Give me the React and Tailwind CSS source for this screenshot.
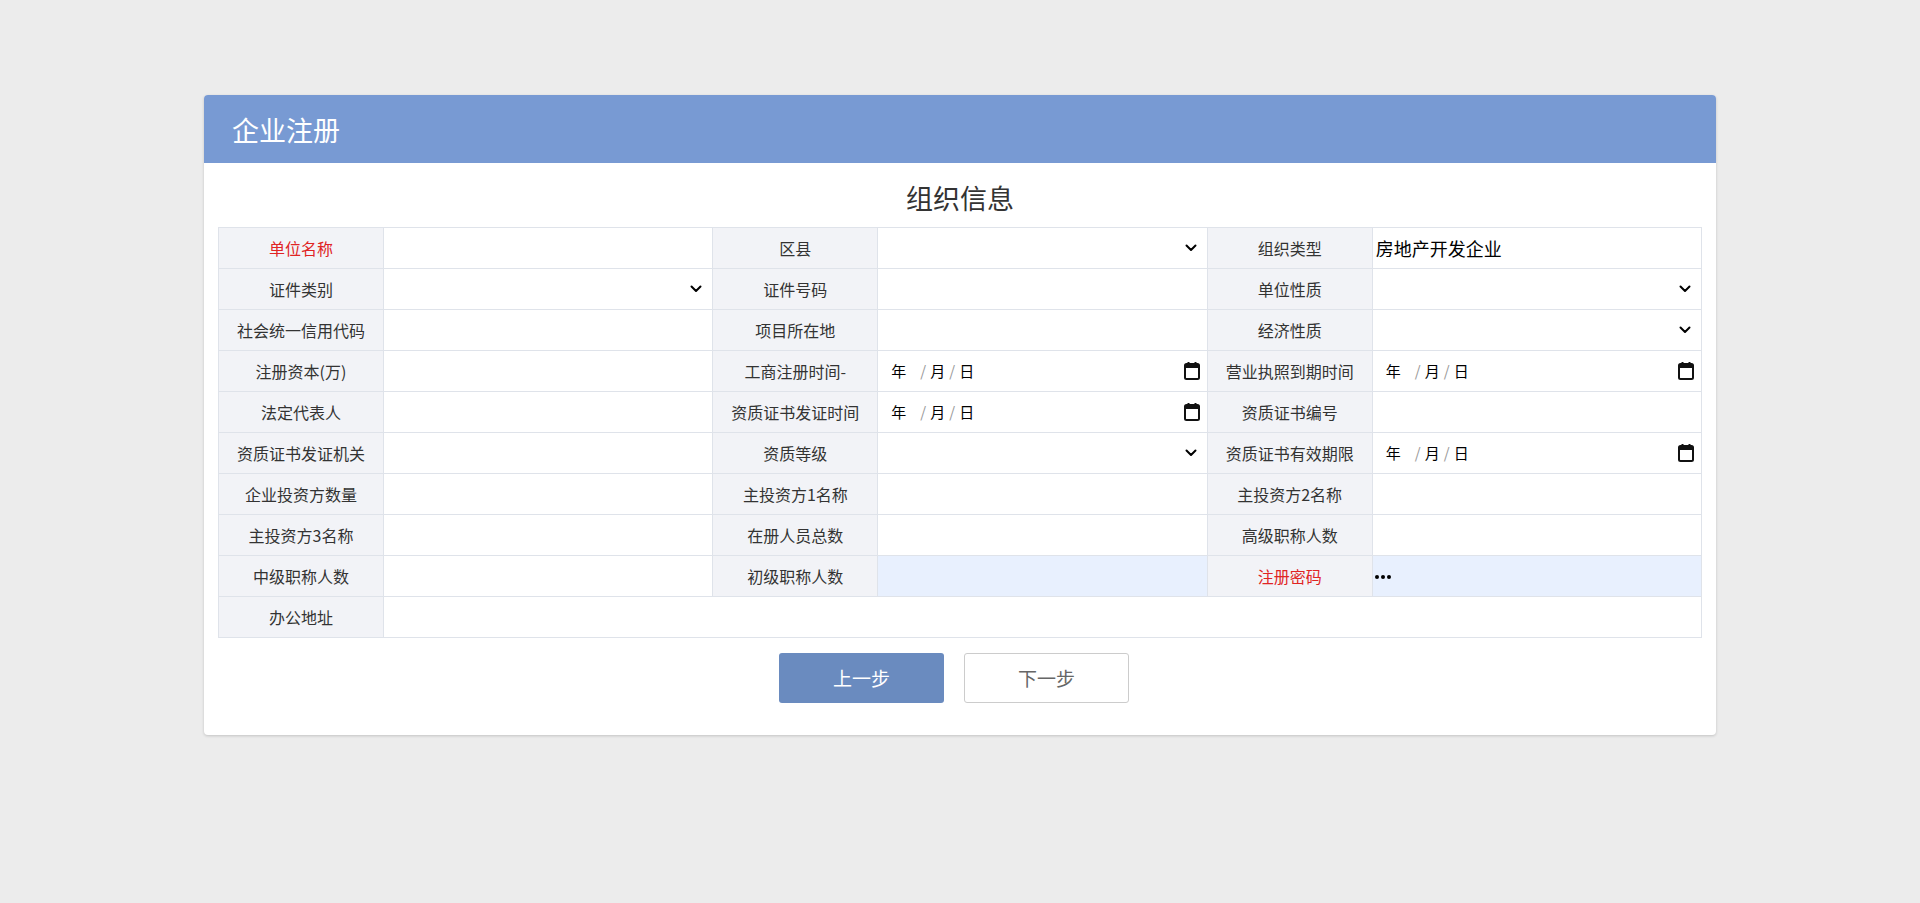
import React from "react";

const Chevron = () => (
  <svg width="12" height="8" viewBox="0 0 12 8" className="shrink-0">
    <path d="M1.5 1.5 L6 6 L10.5 1.5" fill="none" stroke="#000" strokeWidth="2" strokeLinecap="round" strokeLinejoin="round" />
  </svg>
);

const Calendar = () => (
  <svg width="16" height="18" viewBox="0 0 16 18" className="shrink-0">
    <rect x="1" y="2" width="14" height="15" rx="1.5" fill="none" stroke="#111" strokeWidth="2" />
    <rect x="1" y="2" width="14" height="4" fill="#111" />
    <rect x="3.5" y="0" width="2" height="3" fill="#111" />
    <rect x="10.5" y="0" width="2" height="3" fill="#111" />
  </svg>
);

function Label({ text, red }) {
  return (
    <div
      className={`h-[41px] border-r border-b border-[#dfe3ea] bg-[#f2f3f7] flex items-center justify-center text-[16px] ${
        red ? "text-[#e02424]" : "text-[#333]"
      }`}
    >
      {text}
    </div>
  );
}

function Value({ type, text, blue, span }) {
  let inner = null;
  if (type === "select") {
    inner = (
      <div className="flex-1 flex items-center justify-end pr-[10px]">
        <Chevron />
      </div>
    );
  } else if (type === "date") {
    inner = (
      <div className="flex-1 flex items-center justify-between pl-[13px] pr-[7px] text-[15px] text-black">
        <div className="flex items-center">
          <span className="inline-block w-[29px]">年</span>
          <span className="inline-block w-[10px] text-[#999]">/</span>
          <span className="inline-block w-[19px]">月</span>
          <span className="inline-block w-[10px] text-[#999]">/</span>
          <span>日</span>
        </div>
        <Calendar />
      </div>
    );
  } else if (type === "text") {
    inner = <div className="pl-[3px] text-[18px] text-black">{text}</div>;
  } else if (type === "password") {
    inner = (
      <div className="pl-[2px] flex items-center gap-[2px] pt-[1px]">
        <div className="w-[4px] h-[4px] rounded-full bg-black" />
        <div className="w-[4px] h-[4px] rounded-full bg-black" />
        <div className="w-[4px] h-[4px] rounded-full bg-black" />
      </div>
    );
  }
  return (
    <div
      className={`h-[41px] border-r border-b border-[#dfe3ea] flex items-center ${blue ? "bg-[#e8f0fe]" : "bg-white"} ${
        span ? "col-span-5" : ""
      }`}
    >
      {inner}
    </div>
  );
}

const rows = [
  [
    { l: "单位名称", red: true },
    { l: "区县", t: "select" },
    { l: "组织类型", t: "text", v: "房地产开发企业" },
  ],
  [
    { l: "证件类别", t: "select" },
    { l: "证件号码" },
    { l: "单位性质", t: "select" },
  ],
  [
    { l: "社会统一信用代码" },
    { l: "项目所在地" },
    { l: "经济性质", t: "select" },
  ],
  [
    { l: "注册资本(万)" },
    { l: "工商注册时间-", t: "date" },
    { l: "营业执照到期时间", t: "date" },
  ],
  [
    { l: "法定代表人" },
    { l: "资质证书发证时间", t: "date" },
    { l: "资质证书编号" },
  ],
  [
    { l: "资质证书发证机关" },
    { l: "资质等级", t: "select" },
    { l: "资质证书有效期限", t: "date" },
  ],
  [
    { l: "企业投资方数量" },
    { l: "主投资方1名称" },
    { l: "主投资方2名称" },
  ],
  [
    { l: "主投资方3名称" },
    { l: "在册人员总数" },
    { l: "高级职称人数" },
  ],
  [
    { l: "中级职称人数" },
    { l: "初级职称人数", blue: true },
    { l: "注册密码", red: true, t: "password", blue: true },
  ],
];

export default function App() {
  return (
    <div
      className="min-h-[903px] w-full bg-[#ececec] pt-[95px]"
      style={{ fontFamily: '"Noto Sans CJK SC", "Noto Sans", sans-serif' }}
    >
      <div className="mx-auto w-[1512px] rounded-[4px] bg-white shadow-[0_1px_3px_rgba(0,0,0,0.18)] overflow-hidden">
        <div className="h-[68px] bg-[#789ad3] flex items-center pl-[28px]">
          <span className="text-white text-[27px] leading-none">企业注册</span>
        </div>
        <div className="px-[14px] pb-[32px]">
          <div className="h-[64px] flex items-center justify-center text-[27px] text-[#333] leading-none pt-[4px]">
            组织信息
          </div>
          <div className="grid grid-cols-[165px_1fr_165px_1fr_165px_1fr] border-l border-t border-[#dfe3ea]">
            {rows.map((r, i) => (
              <React.Fragment key={i}>
                {r.map((c, j) => (
                  <React.Fragment key={j}>
                    <Label text={c.l} red={c.red} />
                    <Value type={c.t} text={c.v} blue={c.blue} />
                  </React.Fragment>
                ))}
              </React.Fragment>
            ))}
            <Label text="办公地址" />
            <Value span />
          </div>
          <div className="mt-[15px] flex justify-center gap-[20px] pr-[12px]">
            <button className="w-[165px] h-[50px] rounded-[3px] bg-[#6a8bbf] text-white text-[19px]">上一步</button>
            <button className="w-[165px] h-[50px] rounded-[3px] bg-white border border-[#cccccc] text-[#666] text-[19px]">
              下一步
            </button>
          </div>
        </div>
      </div>
    </div>
  );
}
